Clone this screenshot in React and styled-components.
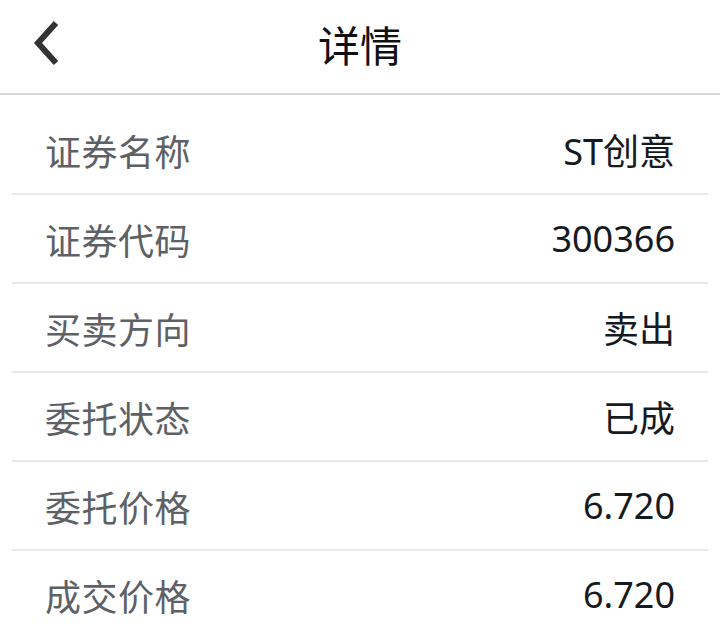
import React from "react";
import styled, { createGlobalStyle } from "styled-components";

const GlobalStyle = createGlobalStyle`
  html, body {
    margin: 0;
    padding: 0;
    background: #ffffff;
    font-family: "Noto Sans", "Noto Sans CJK SC", sans-serif;
  }
`;

const details = [
  { label: "证券名称", value: "ST创意" },
  { label: "证券代码", value: "300366" },
  { label: "买卖方向", value: "卖出" },
  { label: "委托状态", value: "已成" },
  { label: "委托价格", value: "6.720" },
  { label: "成交价格", value: "6.720" },
];

const Page = styled.div`
  width: 720px;
  min-height: 638px;
  background: #fff;
`;

const Header = styled.header`
  position: relative;
  height: 93px;
  display: flex;
  align-items: center;
  justify-content: center;
  border-bottom: 2px solid #d6d6d6;
`;

const BackButton = styled.button`
  position: absolute;
  left: 28px;
  top: 20px;
  width: 34px;
  height: 46px;
  padding: 0;
  border: none;
  background: none;
  display: flex;
  align-items: center;
  justify-content: center;
  cursor: pointer;
`;

const Title = styled.h1`
  margin: -6px 0 0;
  font-family: "Noto Sans CJK SC", sans-serif;
  font-size: 42px;
  font-weight: 400;
  color: #111;
  line-height: 1;
`;

const List = styled.div`
  padding-top: 11px;
`;

const Row = styled.div`
  height: 87px;
  margin: 0 12px;
  padding: 0 33px;
  display: flex;
  align-items: center;
  justify-content: space-between;
  border-bottom: ${(p) => (p.$last ? "none" : "2px solid #e8e8e8")};
`;

const Label = styled.span`
  font-family: "Noto Sans CJK SC", sans-serif;
  font-size: 36px;
  color: #5d6166;
  letter-spacing: 0.5px;
`;

const Value = styled.span`
  font-family: "Noto Sans", "Noto Sans CJK SC", sans-serif;
  font-size: 36px;
  color: #151a1f;
`;

function BackIcon() {
  return (
    <svg width="30" height="44" viewBox="0 0 30 44">
      <path
        d="M26 2 L8 22 L26 42"
        fill="none"
        stroke="#333"
        strokeWidth="6"
        strokeLinecap="butt"
        strokeLinejoin="miter"
      />
    </svg>
  );
}

export default function App() {
  return (
    <Page>
      <GlobalStyle />
      <Header>
        <BackButton aria-label="返回">
          <BackIcon />
        </BackButton>
        <Title>详情</Title>
      </Header>
      <List>
        {details.map((item, i) => (
          <Row key={item.label} $last={i === details.length - 1}>
            <Label>{item.label}</Label>
            <Value>{item.value}</Value>
          </Row>
        ))}
      </List>
    </Page>
  );
}
